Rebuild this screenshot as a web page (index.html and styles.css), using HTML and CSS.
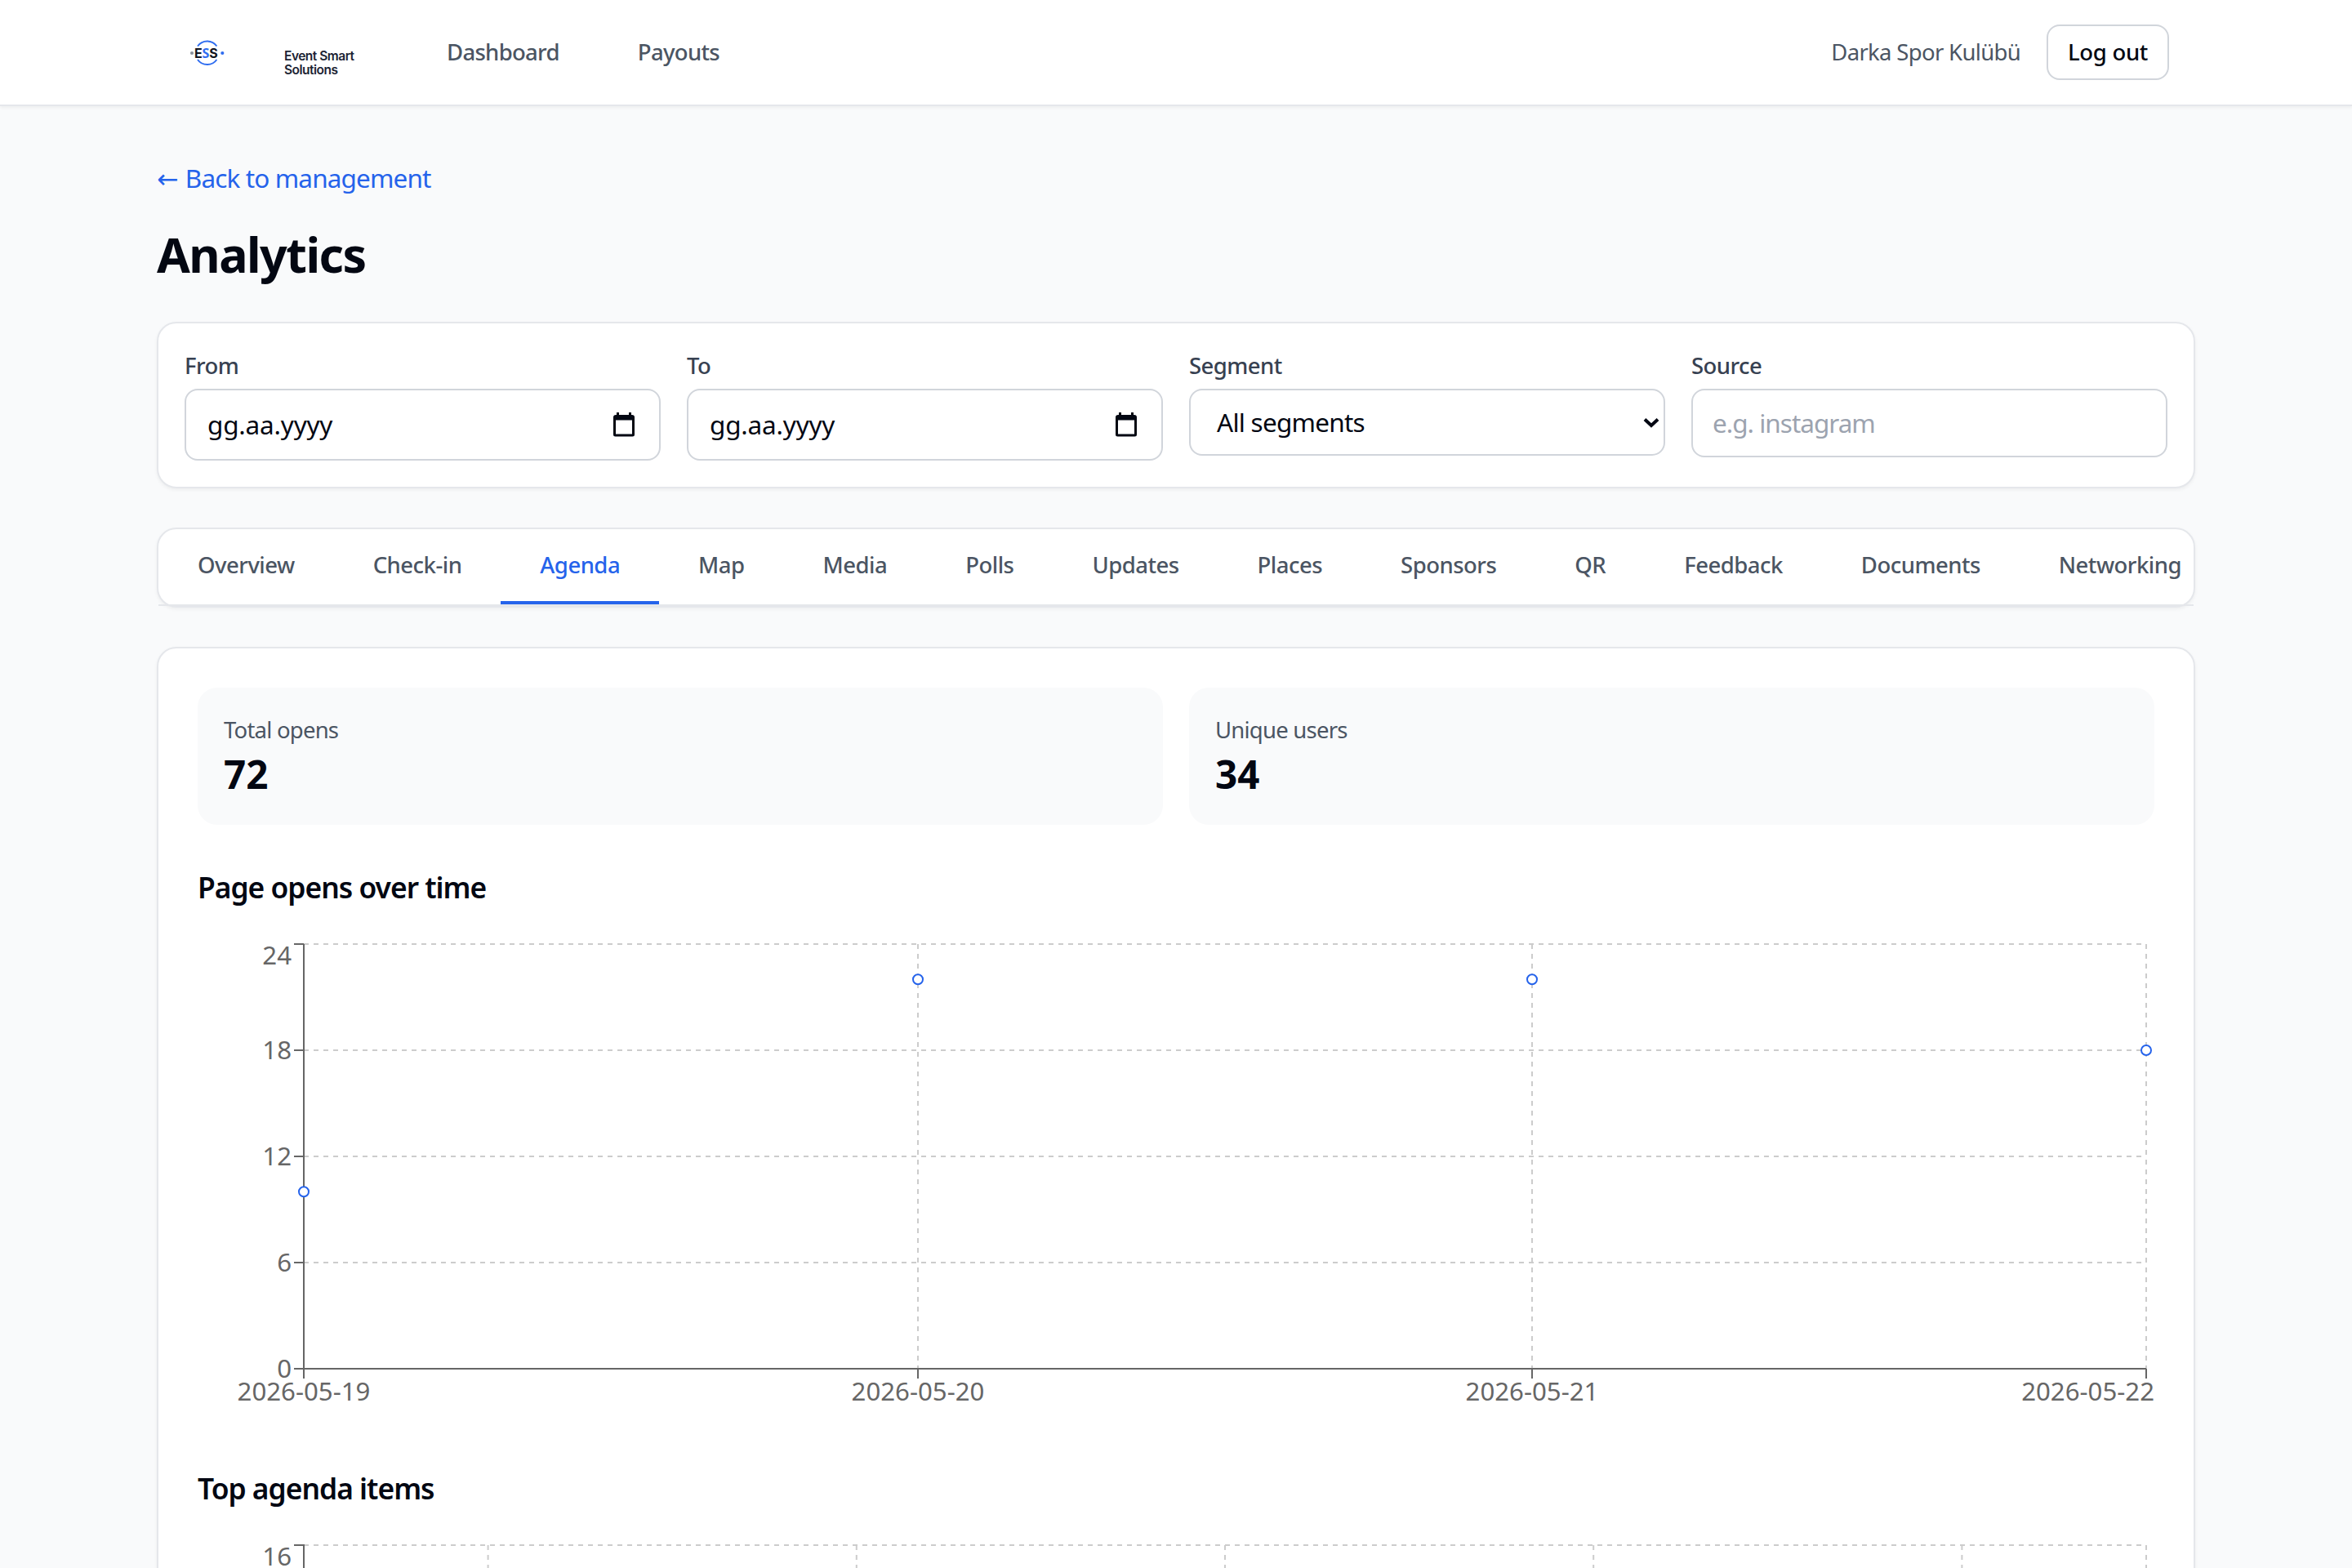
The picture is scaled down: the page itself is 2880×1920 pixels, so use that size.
FILE: index.html
```
<!DOCTYPE html>
<html lang="en">
<head>
    <meta charset="UTF-8">
    <meta name="viewport" content="width=device-width, initial-scale=1.0">
    <title>Analytics - Event Smart Solutions</title>
    <link rel="stylesheet" href="styles.css">
</head>
<body>

    <header class="header">
        <div class="header-inner">
            <svg class="logo" viewBox="0 0 226 128">
                <path class="logo-ring" d="M18 56.5a14.3 14.3 0 0 1 23.4 0M18 73a14.3 14.3 0 0 0 23.4 0"/>
                <circle cx="11" cy="65" r="2.1" fill="#8b929c"/>
                <circle cx="48.3" cy="65" r="2.1" fill="#2f6df0"/>
                <text class="logo-mark" x="14" y="70.7">E<tspan fill="#2f6df0">S</tspan>S</text>
                <text class="logo-name" x="124" y="74">Event Smart</text>
                <text class="logo-name" x="124" y="91">Solutions</text>
            </svg>
            <nav class="nav">
                <a href="#" class="nav-link">Dashboard</a>
                <a href="#" class="nav-link">Payouts</a>
            </nav>
            <div class="account">
                <span class="account-name">Darka Spor Kulübü</span>
                <button type="button" class="logout-button">Log out</button>
            </div>
        </div>
    </header>

    <main class="main-content">
        <a href="#" class="back-link"><span class="arrow">←</span> Back to management</a>
        <h1>Analytics</h1>

        <div class="card filters">
            <div class="form-group">
                <label>From</label>
                <div class="field date-field">
                    <span>gg.aa.yyyy</span>
                    <svg class="calendar-icon" viewBox="0 0 26 30">
                        <path d="M4 0h3v3h12V0h3v3h1a3 3 0 0 1 3 3v21a2.5 2.5 0 0 1-2.5 2.5h-21A2.5 2.5 0 0 1 0 27V6a3 3 0 0 1 3-3h1zM3 9.5V26.5h20V9.5z"/>
                    </svg>
                </div>
            </div>
            <div class="form-group">
                <label>To</label>
                <div class="field date-field">
                    <span>gg.aa.yyyy</span>
                    <svg class="calendar-icon" viewBox="0 0 26 30">
                        <path d="M4 0h3v3h12V0h3v3h1a3 3 0 0 1 3 3v21a2.5 2.5 0 0 1-2.5 2.5h-21A2.5 2.5 0 0 1 0 27V6a3 3 0 0 1 3-3h1zM3 9.5V26.5h20V9.5z"/>
                    </svg>
                </div>
            </div>
            <div class="form-group">
                <label>Segment</label>
                <div class="field select-field">
                    <span>All segments</span>
                    <svg class="chevron-icon" viewBox="0 0 20 13">
                        <path d="M2 2.5l8 7.5 8-7.5"/>
                    </svg>
                </div>
            </div>
            <div class="form-group">
                <label for="source">Source</label>
                <input type="text" id="source" class="field source-field" placeholder="e.g. instagram">
            </div>
        </div>

        <div class="card tabs-card">
            <nav class="tabs">
                <a href="#" class="tab">Overview</a>
                <a href="#" class="tab">Check-in</a>
                <a href="#" class="tab active">Agenda</a>
                <a href="#" class="tab">Map</a>
                <a href="#" class="tab">Media</a>
                <a href="#" class="tab">Polls</a>
                <a href="#" class="tab">Updates</a>
                <a href="#" class="tab">Places</a>
                <a href="#" class="tab">Sponsors</a>
                <a href="#" class="tab">QR</a>
                <a href="#" class="tab">Feedback</a>
                <a href="#" class="tab">Documents</a>
                <a href="#" class="tab">Networking</a>
            </nav>
        </div>

        <div class="card content">
            <div class="stats-container">
                <div class="stat-card">
                    <div class="stat-label">Total opens</div>
                    <div class="stat-value">72</div>
                </div>
                <div class="stat-card">
                    <div class="stat-label">Unique users</div>
                    <div class="stat-value">34</div>
                </div>
            </div>

            <section>
                <h2>Page opens over time</h2>
                <svg class="chart" viewBox="0 0 2396 600">
                    <g class="grid">
                        <path d="M130 10H2386"/>
                        <path d="M130 140H2386"/>
                        <path d="M130 270H2386"/>
                        <path d="M130 400H2386"/>
                        <path d="M882 10V530"/>
                        <path d="M1634 10V530"/>
                        <path d="M2386 10V530"/>
                    </g>
                    <g class="axis">
                        <path d="M130 10V530H2386"/>
                        <path d="M118 10h12M118 140h12M118 270h12M118 400h12M118 530h12"/>
                        <path d="M130 530v12M882 530v12M1634 530v12M2386 530v12"/>
                    </g>
                    <g class="tick-label end">
                        <text x="115" y="35">24</text>
                        <text x="115" y="151">18</text>
                        <text x="115" y="281">12</text>
                        <text x="115" y="411">6</text>
                        <text x="115" y="541">0</text>
                        <text x="2396" y="569">2026-05-22</text>
                    </g>
                    <g class="tick-label middle">
                        <text x="130" y="569">2026-05-19</text>
                        <text x="882" y="569">2026-05-20</text>
                        <text x="1634" y="569">2026-05-21</text>
                    </g>
                    <g class="dots">
                        <circle cx="130" cy="313.3" r="6"/>
                        <circle cx="882" cy="53.3" r="6"/>
                        <circle cx="1634" cy="53.3" r="6"/>
                        <circle cx="2386" cy="140" r="6"/>
                    </g>
                </svg>
            </section>

            <section>
                <h2>Top agenda items</h2>
                <svg class="chart" viewBox="0 0 2396 600">
                    <g class="grid">
                        <path d="M130 10H2386"/>
                        <path d="M355.6 10V530"/>
                        <path d="M806.8 10V530"/>
                        <path d="M1258 10V530"/>
                        <path d="M1709.2 10V530"/>
                        <path d="M2160.4 10V530"/>
                        <path d="M2386 10V530"/>
                    </g>
                    <g class="axis">
                        <path d="M118 10h12V530"/>
                    </g>
                    <g class="tick-label end">
                        <text x="115" y="35">16</text>
                    </g>
                </svg>
            </section>
        </div>
    </main>

</body>
</html>
```
FILE: styles.css
```
:root {
    --primary: #2563eb;
    --background: #f9fafb;
    --white: #ffffff;
    --text: #030712;
    --text-medium: #374151;
    --text-light: #4b5563;
    --border: #e5e7eb;
    --border-field: #d1d5db;
}

* {
    margin: 0;
    padding: 0;
    box-sizing: border-box;
    font-family: "Noto Sans", "Open Sans", sans-serif;
}

body {
    height: 1920px;
    overflow: hidden;
    background-color: var(--background);
    color: var(--text);
    font-size: 31.5px;
    line-height: 48px;
}

a {
    text-decoration: none;
}

.header {
    height: 130px;
    background: var(--white);
    border-bottom: 2px solid var(--border);
    box-shadow: 0 2px 4px rgba(0, 0, 0, 0.05);
}

.header-inner {
    display: flex;
    align-items: center;
    width: 2560px;
    height: 128px;
    margin: 0 auto;
    padding: 0 64px;
}

.logo {
    width: 226px;
    height: 128px;
    margin-right: 97px;
}

.logo-ring {
    fill: none;
    stroke: #2f6df0;
    stroke-width: 2;
}

.logo-mark {
    font-family: Inter, sans-serif;
    font-size: 16px;
    font-weight: 700;
    letter-spacing: -0.2px;
    fill: #10141f;
}

.logo-name {
    font-family: Inter, sans-serif;
    font-size: 15.5px;
    font-weight: 600;
    letter-spacing: -0.5px;
    fill: #1b2333;
}

.nav {
    display: flex;
    gap: 96px;
}

.nav-link,
.account-name,
.logout-button,
label,
.tab,
.stat-label {
    font-size: 27.5px;
    line-height: 40px;
}

.nav-link {
    color: var(--text-light);
    font-weight: 500;
    letter-spacing: -0.7px;
}

.account {
    display: flex;
    align-items: center;
    gap: 32px;
    margin-left: auto;
}

.account-name {
    color: var(--text-light);
    letter-spacing: -0.68px;
}

.logout-button {
    width: 150px;
    height: 68px;
    border: 2px solid var(--border-field);
    border-radius: 16px;
    background: var(--white);
    color: var(--text);
    font-weight: 500;
    letter-spacing: -0.3px;
}

.main-content {
    display: flex;
    flex-direction: column;
    width: 2496px;
    margin: 0 auto;
    padding-top: 64px;
}

.back-link {
    align-self: flex-start;
    color: var(--primary);
    letter-spacing: -0.87px;
}

.arrow {
    margin-right: 2px;
    font-family: "DejaVu Sans", sans-serif;
    line-height: 1;
}

h1 {
    margin: 33px 0 47px;
    font-size: 59px;
    font-weight: 700;
    line-height: 72px;
    letter-spacing: -1.5px;
}

.card {
    background: var(--white);
    border: 2px solid var(--border);
    border-radius: 24px;
    box-shadow: 0 2px 4px rgba(0, 0, 0, 0.05);
}

.filters {
    display: grid;
    grid-template-columns: repeat(4, 1fr);
    align-items: start;
    gap: 32px;
    padding: 32px;
    margin-bottom: 48px;
}

.form-group {
    display: flex;
    flex-direction: column;
    gap: 8px;
}

label {
    color: var(--text-medium);
    font-weight: 500;
    letter-spacing: -0.55px;
}

.field {
    display: flex;
    align-items: center;
    justify-content: space-between;
    width: 100%;
    border: 2px solid var(--border-field);
    border-radius: 16px;
    background: var(--white);
    font-size: 31.5px;
    line-height: 48px;
}

.date-field {
    height: 88px;
    padding: 0 30px 0 26px;
    letter-spacing: -0.2px;
}

.calendar-icon {
    width: 26px;
    height: 30px;
    fill: var(--text);
}

.select-field {
    height: 82px;
    padding: 0 5px 0 32px;
    letter-spacing: -0.75px;
}

.chevron-icon {
    width: 20px;
    height: 13px;
    fill: none;
    stroke: var(--text);
    stroke-width: 4;
}

.source-field {
    height: 84px;
    padding: 0 24px 2px;
    letter-spacing: -1px;
}

.source-field::placeholder {
    color: #9ca3af;
}

.tabs-card {
    margin-bottom: 48px;
}

.tabs {
    display: flex;
    border-bottom: 2px solid var(--border);
    overflow: hidden;
}

.tab {
    flex-shrink: 0;
    padding: 24px 48px;
    border-bottom: 4px solid transparent;
    color: var(--text-light);
    font-weight: 500;
    letter-spacing: -0.52px;
}

.tab.active {
    color: var(--primary);
    border-bottom-color: var(--primary);
}

.content {
    display: flex;
    flex-direction: column;
    gap: 48px;
    padding: 48px;
}

.stats-container {
    display: grid;
    grid-template-columns: 1fr 1fr;
    gap: 32px;
}

.stat-card {
    height: 168px;
    padding: 32px;
    border-radius: 24px;
    background: var(--background);
}

.stat-label {
    color: var(--text-light);
    letter-spacing: -0.78px;
}

.stat-value {
    font-size: 47.5px;
    font-weight: 700;
    line-height: 67px;
}

h2 {
    margin-bottom: 32px;
    font-size: 35.4px;
    font-weight: 600;
    line-height: 56px;
    letter-spacing: -1px;
}

.chart {
    display: block;
    width: 2396px;
    height: 600px;
}

.grid path {
    stroke: #cccccc;
    stroke-width: 2;
    stroke-dasharray: 6 6;
}

.axis path {
    fill: none;
    stroke: #666666;
    stroke-width: 2;
}

.tick-label {
    fill: #666666;
    font-size: 31.2px;
}

.end {
    text-anchor: end;
}

.middle {
    text-anchor: middle;
}

.dots circle {
    fill: var(--white);
    stroke: var(--primary);
    stroke-width: 2;
}
```
